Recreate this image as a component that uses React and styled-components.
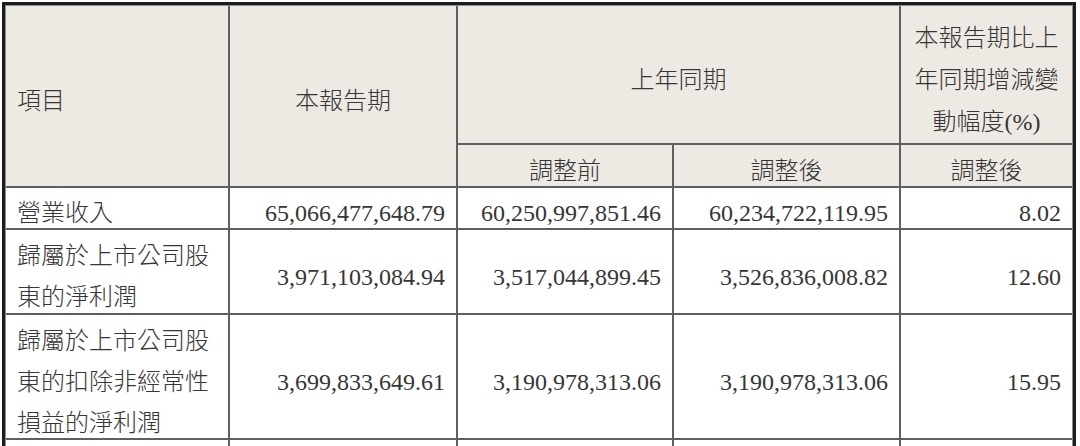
import React from "react";
import styled, { createGlobalStyle } from "styled-components";

const GlobalStyle = createGlobalStyle`
  html, body {
    margin: 0;
    padding: 0;
    background: #ffffff;
    overflow: hidden;
  }
  body {
    font-family: "Liberation Serif", "Noto Sans CJK TC", serif;
    color: #333333;
  }
`;

const Frame = styled.div`
  display: inline-block;
  margin: 2px 0 0 2px;
  border: 3px solid #1d1d1d;
  padding: 1px;
  background: #8c8c8c;
`;

const Grid = styled.div`
  display: grid;
  grid-template-columns: 222px 226px 214px 225px 171px;
  grid-template-rows: 137px 41px 40px 83px 123px 60px;
  gap: 2px;
  background: #5f5f5f;
`;

const Cell = styled.div`
  display: flex;
  align-items: center;
  justify-content: ${({ $align }) =>
    $align === "right" ? "flex-end" : $align === "center" ? "center" : "flex-start"};
  text-align: ${({ $align }) => $align || "left"};
  grid-column: ${({ $colSpan }) => ($colSpan ? `span ${$colSpan}` : "auto")};
  grid-row: ${({ $rowSpan }) => ($rowSpan ? `span ${$rowSpan}` : "auto")};
  padding: 11px 11px 0 11px;
  background: ${({ $head }) => ($head ? "#edeae3" : "#ffffff")};
  font-family: "Liberation Serif", "Noto Sans CJK TC", serif;
  font-weight: 300;
  font-size: 24px;
  line-height: 41px;
  color: #363636;
  white-space: nowrap;
`;

const Lines = styled.div`
  display: flex;
  flex-direction: column;
  align-items: ${({ $align }) => ($align === "center" ? "center" : "flex-start")};
  line-height: ${({ $lh }) => $lh || 41}px;
`;

const rows = [
  {
    label: ["營業收入"],
    values: ["65,066,477,648.79", "60,250,997,851.46", "60,234,722,119.95", "8.02"],
  },
  {
    label: ["歸屬於上市公司股", "東的淨利潤"],
    values: ["3,971,103,084.94", "3,517,044,899.45", "3,526,836,008.82", "12.60"],
  },
  {
    label: ["歸屬於上市公司股", "東的扣除非經常性", "損益的淨利潤"],
    values: ["3,699,833,649.61", "3,190,978,313.06", "3,190,978,313.06", "15.95"],
  },
];

export default function App() {
  return (
    <>
      <GlobalStyle />
      <Frame>
        <Grid>
          <Cell $head $rowSpan={2}>項目</Cell>
          <Cell $head $rowSpan={2} $align="center">本報告期</Cell>
          <Cell $head $colSpan={2} $align="center">上年同期</Cell>
          <Cell $head $align="center">
            <Lines $align="center" $lh={42}>
              <span>本報告期比上</span>
              <span>年同期增減變</span>
              <span>動幅度(%)</span>
            </Lines>
          </Cell>
          <Cell $head $align="center">調整前</Cell>
          <Cell $head $align="center">調整後</Cell>
          <Cell $head $align="center">調整後</Cell>

          {rows.map((r, i) => (
            <React.Fragment key={i}>
              <Cell>
                <Lines>
                  {r.label.map((l, j) => (
                    <span key={j}>{l}</span>
                  ))}
                </Lines>
              </Cell>
              {r.values.map((v, j) => (
                <Cell key={j} $align="right">{v}</Cell>
              ))}
            </React.Fragment>
          ))}

          <Cell />
          <Cell />
          <Cell />
          <Cell />
          <Cell />
        </Grid>
      </Frame>
    </>
  );
}
